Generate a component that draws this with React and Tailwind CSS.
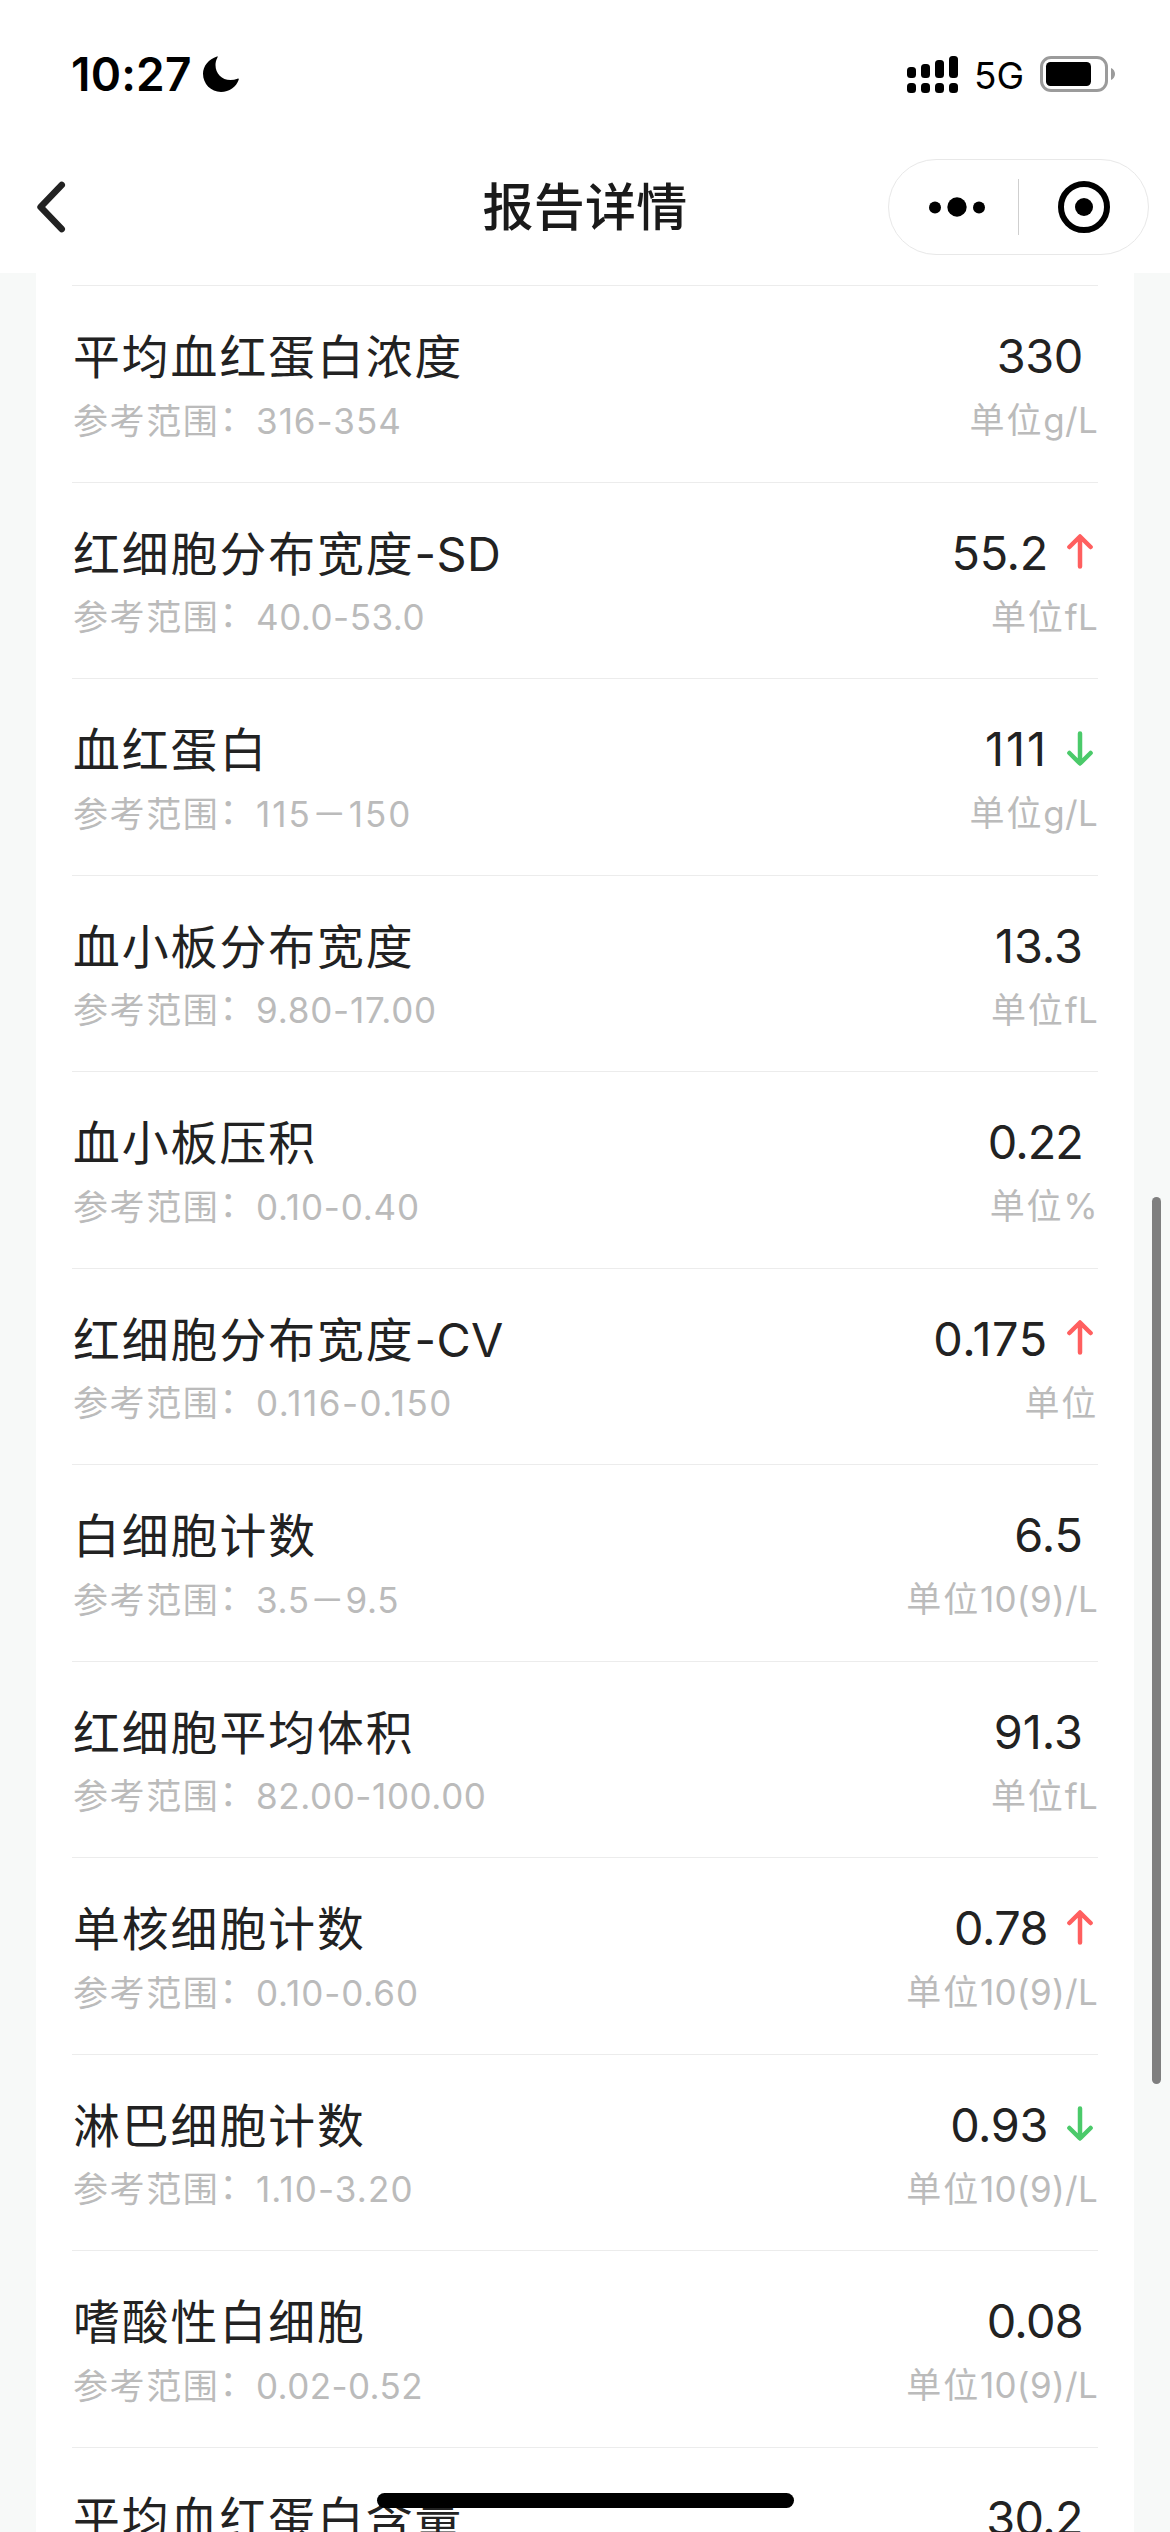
import clsx from 'clsx';

const items = [
  { name: '平均血红蛋白浓度', range: '316-354', rangeClass: 'tracking-[1px]', value: '330', valueClass: 'tracking-[-0.4px]', unit: 'g/L' },
  { name: '红细胞分布宽度', code: '-SD', range: '40.0-53.0', rangeClass: 'tracking-[0.5px]', value: '55.2', valueClass: 'tracking-[-0.3px]', unit: 'fL', trend: 'up' },
  { name: '血红蛋白', range: '115－150', rangeClass: 'tracking-[2px]', value: '111', valueClass: 'tracking-[2px]', unit: 'g/L', trend: 'down' },
  { name: '血小板分布宽度', range: '9.80-17.00', rangeClass: 'tracking-[0.8px]', value: '13.3', unit: 'fL' },
  { name: '血小板压积', range: '0.10-0.40', rangeClass: 'tracking-[0.8px]', value: '0.22', valueClass: 'tracking-[-0.9px]', unit: '%' },
  { name: '红细胞分布宽度', code: '-CV', range: '0.116-0.150', rangeClass: 'tracking-[1.5px]', value: '0.175', valueClass: 'tracking-[0.7px]', unit: '', trend: 'up' },
  { name: '白细胞计数', range: '3.5－9.5', rangeClass: 'tracking-[0.7px]', value: '6.5', unit: '10(9)/L' },
  { name: '红细胞平均体积', range: '82.00-100.00', rangeClass: 'tracking-[0.6px]', value: '91.3', unit: 'fL' },
  { name: '单核细胞计数', range: '0.10-0.60', rangeClass: 'tracking-[0.9px]', value: '0.78', valueClass: 'tracking-[-0.5px]', unit: '10(9)/L', trend: 'up' },
  { name: '淋巴细胞计数', range: '1.10-3.20', rangeClass: 'tracking-[1.1px]', value: '0.93', valueClass: 'tracking-[-0.4px]', unit: '10(9)/L', trend: 'down' },
  { name: '嗜酸性白细胞', range: '0.02-0.52', rangeClass: 'tracking-[0.4px]', value: '0.08', valueClass: 'tracking-[-0.7px]', unit: '10(9)/L' },
  { name: '平均血红蛋白含量', value: '30.2', valueClass: 'tracking-[-0.6px]' },
];

const StatusBar = () => (
  <div className="flex h-[141px] items-start justify-between pl-[71px] pr-[54px]">
    <div className="flex items-center pt-[46px]">
      <span className="w-[132px] text-[46px] font-semibold leading-[56px] tracking-[0.2px] text-black">10:27</span>
      <svg className="h-9 w-9" viewBox="0 0 36 36">
        <path
          d="M14 .4C5.8 3 0 9.8 0 17.8 0 27.9 8 36 18 36c8.3 0 15.300-5 17.700-12.200.3-.9-.4-1.400-1.200-1.100-2.300.9-4.600 1.300-7 1.300C18.800 24 12.500 17.800 12.500 9c0-2.600.6-5 1.900-7.300.4-.9.2-1.500-.4-1.300z"
          fill="#000"
        />
      </svg>
    </div>
    <div className="flex items-start pt-14">
      <svg className="h-[37px] w-[51px]" viewBox="0 0 51 37">
        <rect x="0" y="11" width="9" height="11" rx="3.5" />
        <rect x="14" y="8" width="9" height="14" rx="3.5" />
        <rect x="28" y="4" width="9" height="18" rx="3.5" />
        <rect x="42" y="0" width="9" height="22" rx="3.5" />
        <rect x="0" y="27" width="9" height="10" rx="3.5" />
        <rect x="14" y="27" width="9" height="10" rx="3.5" />
        <rect x="28" y="27" width="9" height="10" rx="3.5" />
        <rect x="42" y="27" width="9" height="10" rx="3.5" />
      </svg>
      <span className="ml-4 mt-px w-[66px] text-[37px] leading-[38px] text-black">5G</span>
      <svg className="h-9 w-[76px]" viewBox="0 0 76 36">
        <rect x="1.5" y="1.5" width="65" height="33" rx="9.5" fill="none" stroke="#9b9b9b" strokeWidth="3" />
        <rect x="6" y="6" width="45" height="24" rx="4.5" />
        <path d="M71 12c2.600 1.200 4 3.400 4 6s-1.400 4.800-4 6z" fill="#9b9b9b" />
      </svg>
    </div>
  </div>
);

const NavBar = () => (
  <div className="flex h-[132px] items-center justify-between pl-9 pr-[21px]">
    <div className="w-[246px]">
      <svg className="h-[52px] w-[30px]" viewBox="0 0 30 52" fill="none">
        <path
          d="M25.700 4 4.600 26l21.100 22"
          stroke="#222"
          strokeWidth="6.6"
          strokeLinecap="round"
          strokeLinejoin="round"
        />
      </svg>
    </div>
    <h1 className="pt-px text-[51px] font-medium leading-[72px] tracking-[0.2px] text-[#1a1a1a]">报告详情</h1>
    <div className="flex h-24 w-[261px] items-center rounded-full border border-[#e8e8e8]">
      <div className="flex h-14 w-[130px] items-center justify-end border-r border-[#cfcfcf] pr-[33px]">
        <svg className="h-5 w-14" viewBox="0 0 56 20">
          <circle cx="6" cy="10.5" r="6" />
          <circle cx="28" cy="10" r="9.7" />
          <circle cx="50" cy="10.5" r="6" />
        </svg>
      </div>
      <svg className="ml-[39px] h-[52px] w-[52px]" viewBox="0 0 52 52">
        <circle cx="26" cy="26" r="23" fill="none" stroke="#000" strokeWidth="6" />
        <circle cx="26" cy="26" r="9" />
      </svg>
    </div>
  </div>
);

const TrendArrow = ({ trend }) => (
  <svg
    className={clsx(
      'mb-[2px] mr-[5px] h-[35px] w-[26px]',
      trend === 'up' ? 'text-[#ff5f5f]' : 'rotate-180 text-[#4bca6a]'
    )}
    viewBox="0 0 26 35"
    fill="none"
  >
    <path
      d="M13 32.500V2.700M2.400 13 13 2.500 23.600 13"
      stroke="currentColor"
      strokeWidth="4.5"
      strokeLinecap="round"
      strokeLinejoin="round"
    />
  </svg>
);

const ReportRow = ({ item }) => (
  <li className="flex h-[196.56px] shrink-0 justify-between border-t border-[#ececec] pt-[37px]">
    <div className="pl-px">
      <p className="mt-px text-[46.8px] leading-[66px] tracking-[2px] text-[#222]">
        {item.name}
        {item.code && <span className="tracking-[0.4px]">{item.code}</span>}
      </p>
      {item.range && (
        <p className="mt-[5.5px] text-[35px] leading-[50px] tracking-[1.6px] text-[#bbb]">
          参考范围<span className="align-[3px] leading-none">：</span>
          <span className={item.rangeClass}>{item.range}</span>
        </p>
      )}
    </div>
    <div className="flex flex-col items-end">
      <div className="flex items-center">
        <span
          className={clsx(
            'text-[46.8px] leading-[66px] text-[#222]',
            item.trend ? 'mr-[19px]' : 'mr-[15px]',
            item.valueClass
          )}
        >
          {item.value}
        </span>
        {item.trend && <TrendArrow trend={item.trend} />}
      </div>
      {item.range && (
        <p className="mt-[6px] text-[35px] leading-[50px] tracking-[1.8px] text-[#bbb]">
          单位<span className="tracking-[0.3px]">{item.unit}</span>
        </p>
      )}
    </div>
  </li>
);

const App = () => {
  return (
    <div className="relative flex h-[2532px] w-[1170px] flex-col overflow-hidden bg-white font-['Inter','Noto_Sans_CJK_SC',sans-serif]">
      <StatusBar />
      <NavBar />
      <main className="min-h-0 flex-1 overflow-hidden bg-[#f7f9f8] px-9">
        <ul className="flex h-full flex-col bg-white px-9 pt-3">
          {items.map((item) => (
            <ReportRow key={item.name + (item.code || '')} item={item} />
          ))}
        </ul>
      </main>
      {/* scroll thumb */}
      <div className="absolute left-[1152px] top-[1197px] h-[887px] w-[9px] rounded-full bg-[#7f7f7f]" />
      {/* home indicator */}
      <div className="absolute left-[377px] top-[2493px] h-[15px] w-[417px] rounded-full bg-black" />
    </div>
  );
};

export default App;
